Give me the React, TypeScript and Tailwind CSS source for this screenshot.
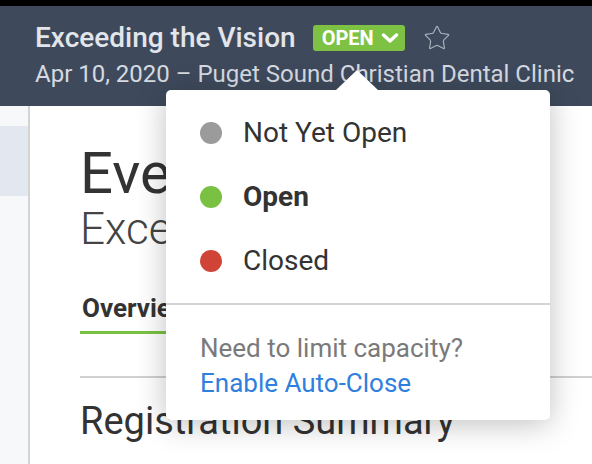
import { Star } from "lucide-react";

const statuses = [
	{ label: "Not Yet Open", dot: "bg-[#9b9b9b]", bold: false },
	{ label: "Open", dot: "bg-[#7ac143]", bold: true },
	{ label: "Closed", dot: "bg-[#d04437]", bold: false },
];

export default function App() {
	return (
		<div className="relative w-[592px] h-[464px] overflow-hidden bg-white font-['Roboto',sans-serif]">
			<div className="h-[6px] bg-black" />
			<header className="h-[100px] bg-[#3e4a5c] px-[35px] pt-[15px]">
				<div className="flex items-center h-[34px]">
					<h1 className="text-[28px] leading-[34px] font-medium text-[#e2e5ea] whitespace-nowrap">Exceeding the Vision</h1>
					<button className="ml-[17px] flex items-center h-[26px] pl-[9px] pr-[6px] rounded-[3px] bg-[#7dc242] text-white text-[20px] leading-none font-bold">
						OPEN
						<svg width="18" height="10" viewBox="0 0 18 10" className="ml-[7px]" fill="none" stroke="currentColor" strokeWidth="3.4" strokeLinecap="round" strokeLinejoin="round">
							<path d="M2.5 2 L9 8 L15.5 2" />
						</svg>
					</button>
					<Star size={28} strokeWidth={1} className="ml-[18px] text-[#a9b1bc]" />
				</div>
				<p className="mt-[4px] text-[24px] leading-[30px] text-[#d6dae0] whitespace-nowrap">Apr 10, 2020 – Puget Sound Christian Dental Clinic</p>
			</header>

			<div className="flex h-[358px]">
				<aside className="w-[30px] shrink-0 bg-[#f7f8fa] border-r-2 border-[#d3d3d3] pt-[20px]">
					<div className="h-[70px] bg-[#e3e7f0]" />
				</aside>
				<main className="flex-1 pl-[50px] whitespace-nowrap text-[#333]">
					<h2 className="mt-[37px] text-[58px] leading-[60px]">Event Dashboard</h2>
					<p className="mt-[1px] text-[44px] leading-[50px] font-light text-[#444]">Exceeding the Vision</p>
					<div className="mt-[39px] flex">
						<div className="border-b-[3px] border-[#7ac143] pb-[7px] pl-[2px] pr-[10px]">
							<span className="text-[26px] leading-[30px] font-bold text-[#333]">Overview</span>
						</div>
					</div>
					<div className="mt-[42px] h-[2px] bg-[#d0d0d0]" />
					<h3 className="mt-[21px] text-[38px] leading-[44px]">Registration Summary</h3>
				</main>
			</div>

			<div className="absolute left-[166px] top-[90px] w-[384px] h-[330px] rounded-[5px] bg-white shadow-[0_4px_30px_rgba(0,0,0,0.25)]">
				<div className="absolute left-[170px] -top-[20px] w-0 h-0 border-x-[21px] border-x-transparent border-b-[20px] border-b-white" />
				<ul className="pt-[11px]">
					{statuses.map((s) => (
						<li key={s.label} className="flex items-center h-[64px] pl-[34px]">
							<span className={`w-[22px] h-[22px] rounded-full ${s.dot}`} />
							<span className={`ml-[21px] text-[28px] leading-[32px] text-[#333] ${s.bold ? "font-bold" : ""}`}>{s.label}</span>
						</li>
					))}
				</ul>
				<div className="mt-[10px] h-[2px] bg-[#d3d3d3]" />
				<div className="pl-[34px] pt-[26px]">
					<p className="text-[26px] leading-[35px] text-[#7a7a7a]">Need to limit capacity?</p>
					<a className="block text-[26px] leading-[35px] text-[#2f80de]">Enable Auto-Close</a>
				</div>
			</div>
		</div>
	);
}
